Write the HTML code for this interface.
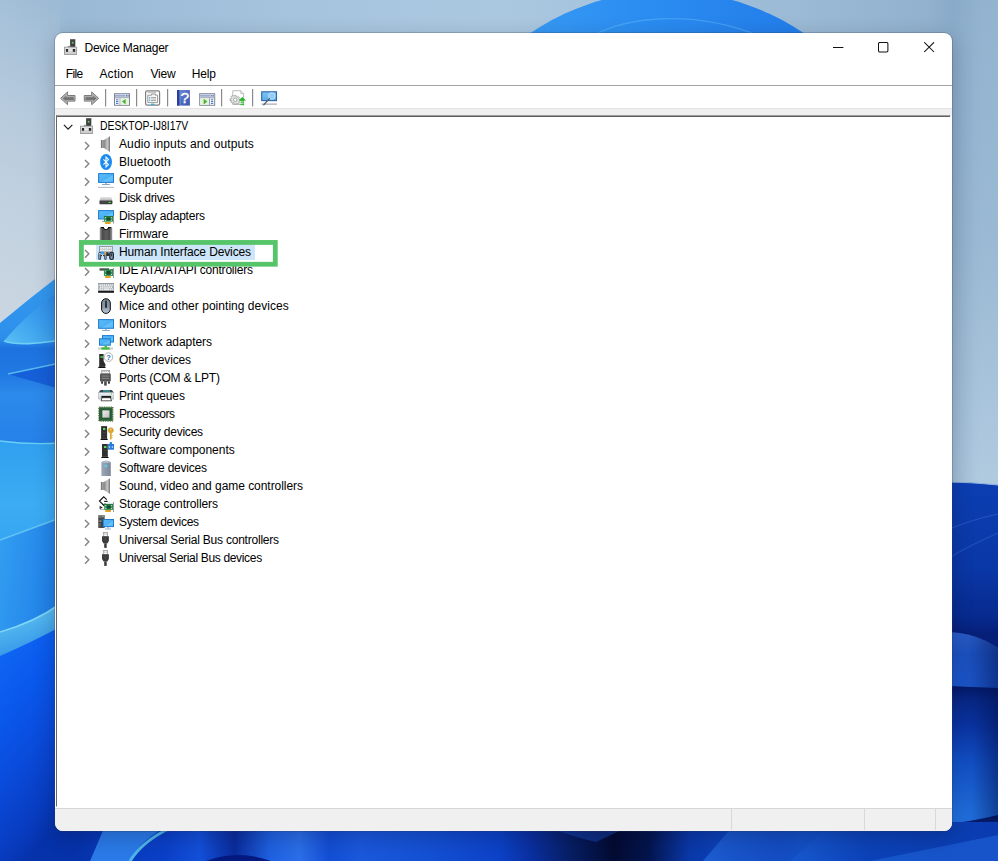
<!DOCTYPE html>
<html lang="en"><head><meta charset="utf-8"><title>Device Manager</title>
<style>
*{box-sizing:border-box;margin:0;padding:0}
html,body{width:998px;height:861px;overflow:hidden;background:#9db9d2}
body{position:relative;font-family:"Liberation Sans",sans-serif;font-size:12px;color:#000}
#wall{position:absolute;left:0;top:0;width:998px;height:861px}
#wall svg{display:block}
#win{position:absolute;left:55px;top:33px;width:897px;height:798px;background:#fff;border-radius:8px;overflow:hidden;box-shadow:0 0 0 1px rgba(50,60,85,.24),0 6px 22px rgba(0,0,25,.22)}
#title{position:absolute;left:0;top:0;width:897px;height:29px}
.ticon{position:absolute;left:8px;top:6px;width:16px;height:16px}
.ticon svg,.ic svg{display:block}
.ttext{position:absolute;left:29.5px;top:8px;line-height:15px;letter-spacing:-0.255px;white-space:nowrap}
.cap{position:absolute;top:9px}
#menu{position:absolute;left:0;top:29px;width:897px;height:23px}
#menu span{position:absolute;top:5px;line-height:15px;white-space:nowrap}
#tools{position:absolute;left:0;top:52px;width:897px;height:24px;border-top:1px solid #a3a3a3;border-bottom:1px solid #e3e3e3;background:#fff}
#band{position:absolute;left:0;top:76px;width:897px;height:6px;background:#f0f0f0}
#tree{position:absolute;left:1px;top:82px;width:895px;height:692px;background:linear-gradient(#5f5f5f 0,#5f5f5f 1px,#fff 1px);border-top:1px solid #9d9d9d;border-left:1px solid #666;border-right:1px solid #fff;border-bottom:1px solid #fff;padding-top:1px}
.row{position:relative;height:18px;white-space:nowrap}
.row .chev{position:absolute;left:27.2px;top:5.7px}
.row .ic{position:absolute;left:41px;top:1px;width:16px;height:16px}
.row .lb{position:absolute;left:62px;top:1.4px;line-height:16px}
.row.root .chev{left:5.5px;top:6.6px}
.row.root .ic{left:22px;top:1px}
.row.root .lb{left:43px}
.row.sel::before{content:'';position:absolute;left:39px;top:0;width:158.6px;height:17.2px;background:#cce5f9}
#status{position:absolute;left:0;top:774px;width:897px;height:24px;background:linear-gradient(#fff 0,#fff 1px,#d6d6d6 1px,#d6d6d6 2px,#f0f0f0 2px)}
#status i{position:absolute;top:2px;width:1px;height:21px;background:#d9d9d9}
#hl{position:absolute;left:0;top:0;width:998px;height:861px;pointer-events:none}

</style></head>
<body>
<svg width="0" height="0" style="position:absolute"><defs>
<linearGradient id="gBase" x1="0" y1="0" x2="0" y2="1"><stop offset="0" stop-color="#e6e6e6"/><stop offset="1" stop-color="#c9c9c9"/></linearGradient>
<linearGradient id="gSpkA" x1="0" y1="0" x2="1" y2="0"><stop offset="0" stop-color="#5c5c5c"/><stop offset=".55" stop-color="#a2a2a2"/><stop offset="1" stop-color="#6e6e6e"/></linearGradient>
<linearGradient id="gSpkB" x1="0" y1="0" x2="1" y2="0"><stop offset="0" stop-color="#7d7d7d"/><stop offset=".6" stop-color="#c6c6c6"/><stop offset=".85" stop-color="#9a9a9a"/><stop offset="1" stop-color="#5a5a5a"/></linearGradient>
<linearGradient id="gScr" x1="0" y1="0" x2="1" y2="1"><stop offset="0" stop-color="#5cbbf7"/><stop offset=".55" stop-color="#4bb1f4"/><stop offset=".6" stop-color="#68c2f8"/><stop offset="1" stop-color="#55b6f5"/></linearGradient>
<linearGradient id="gDiskT" x1="0" y1="0" x2="0" y2="1"><stop offset="0" stop-color="#e8e8e8"/><stop offset="1" stop-color="#b2b2b2"/></linearGradient>
<linearGradient id="gChip" x1="0" y1="0" x2="1" y2="0"><stop offset="0" stop-color="#444"/><stop offset=".5" stop-color="#5e5e5e"/><stop offset="1" stop-color="#484848"/></linearGradient>
<linearGradient id="gMouse" x1="0" y1="0" x2="0" y2="1"><stop offset="0" stop-color="#76869a"/><stop offset=".6" stop-color="#8d9bad"/><stop offset="1" stop-color="#c0c9d3"/></linearGradient>
<linearGradient id="gPrn" x1="0" y1="0" x2="0" y2="1"><stop offset="0" stop-color="#eef1f4"/><stop offset="1" stop-color="#c9d0d8"/></linearGradient>
<linearGradient id="gDie" x1="0" y1="0" x2="1" y2="1"><stop offset="0" stop-color="#f4f4f4"/><stop offset="1" stop-color="#b9b9b9"/></linearGradient>
<linearGradient id="gSw" x1="0" y1="0" x2="1" y2="0"><stop offset="0" stop-color="#9ca8b8"/><stop offset="1" stop-color="#7c899b"/></linearGradient>
</defs></svg>
<div id="wall"><svg width="998" height="861" viewBox="0 0 998 861">
<defs>
<linearGradient id="sky" x1="0" y1="0" x2="1" y2="0">
 <stop offset="0" stop-color="#a4c0d8"/><stop offset=".07" stop-color="#9ab9d4"/><stop offset=".3" stop-color="#a6c4de"/><stop offset=".5" stop-color="#abc8e1"/><stop offset=".8" stop-color="#9bbad5"/><stop offset=".95" stop-color="#90b0cd"/><stop offset="1" stop-color="#93b3cf"/>
</linearGradient>
<linearGradient id="skyL" x1="0" y1="0" x2="0" y2="1">
 <stop offset="0" stop-color="#cfd9e3" stop-opacity="0"/><stop offset=".3" stop-color="#cfd9e3" stop-opacity=".42"/><stop offset=".6" stop-color="#cfd9e3" stop-opacity=".7"/><stop offset="1" stop-color="#cfd9e3" stop-opacity=".92"/>
</linearGradient>
<linearGradient id="skyR" x1="0" y1="0" x2="0" y2="1">
 <stop offset="0" stop-color="#b4cde2" stop-opacity="0"/><stop offset=".5" stop-color="#b4cde2" stop-opacity=".25"/><stop offset="1" stop-color="#b4cde2" stop-opacity=".9"/>
</linearGradient>
<linearGradient id="skyRs" x1="0" y1="0" x2="1" y2="0"><stop offset="0" stop-color="#5f86ae" stop-opacity="0"/><stop offset=".46" stop-color="#5f86ae" stop-opacity=".15"/><stop offset="1" stop-color="#5f86ae" stop-opacity="0"/></linearGradient>
<linearGradient id="top" x1="0" y1="0" x2="1" y2="0">
 <stop offset="0" stop-color="#45a8f6"/><stop offset=".45" stop-color="#2b8df1"/><stop offset="1" stop-color="#1c70e4"/>
</linearGradient>
<linearGradient id="leftA" x1="0" y1="0" x2="0" y2="1">
 <stop offset="0" stop-color="#3399ee"/><stop offset=".36" stop-color="#2d8feb"/><stop offset=".42" stop-color="#1d72df"/><stop offset=".57" stop-color="#2179e3"/><stop offset=".68" stop-color="#2c8aeb"/><stop offset="1" stop-color="#257fe8"/>
</linearGradient>
<linearGradient id="leftB" x1="0" y1="0" x2="0" y2="1">
 <stop offset="0" stop-color="#30a0f0"/><stop offset=".6" stop-color="#3cacf3"/><stop offset="1" stop-color="#36a5f2"/>
</linearGradient>
<linearGradient id="leftC" x1="0" y1="0" x2="1" y2="0.3">
 <stop offset="0" stop-color="#339ff2"/><stop offset="1" stop-color="#2080e7"/>
</linearGradient>
<linearGradient id="leftD" gradientUnits="userSpaceOnUse" x1="0" y1="650" x2="120" y2="750">
 <stop offset="0" stop-color="#0f66f4"/><stop offset=".3" stop-color="#0a58ec"/><stop offset=".55" stop-color="#0a4cdc"/><stop offset=".85" stop-color="#083cc0"/><stop offset="1.1" stop-color="#0632aa"/>
</linearGradient>
<linearGradient id="petal" x1="0" y1="1" x2="1" y2="0">
 <stop offset="0" stop-color="#58c0f4"/><stop offset=".5" stop-color="#3b9fee"/><stop offset="1" stop-color="#2a86e8"/>
</linearGradient>
<linearGradient id="band" x1="0" y1="0" x2="0.35" y2="1">
 <stop offset="0" stop-color="#66c8f3"/><stop offset=".5" stop-color="#4fb2ee"/><stop offset="1" stop-color="#3494e8"/>
</linearGradient>
<linearGradient id="bot" gradientUnits="userSpaceOnUse" x1="0" y1="0" x2="998" y2="0">
 <stop offset=".07" stop-color="#0634ae" stop-opacity="0"/><stop offset=".10" stop-color="#0838b8"/>
 <stop offset=".165" stop-color="#0a40c8"/><stop offset=".2" stop-color="#1350da"/><stop offset=".235" stop-color="#0a2c9c"/>
 <stop offset=".27" stop-color="#1e60e0"/><stop offset=".30" stop-color="#2b6ee8"/><stop offset=".33" stop-color="#134ed4"/>
 <stop offset=".36" stop-color="#1a58dc"/><stop offset=".43" stop-color="#1450d4"/><stop offset=".5" stop-color="#0c42c8"/><stop offset=".535" stop-color="#0a2e9c"/>
 <stop offset=".57" stop-color="#071f66"/><stop offset=".615" stop-color="#030b32"/><stop offset=".65" stop-color="#04154e"/><stop offset=".69" stop-color="#0a38a8"/>
 <stop offset=".74" stop-color="#0e46c0"/><stop offset=".8" stop-color="#1656cc"/><stop offset=".87" stop-color="#0c42b8"/><stop offset="1" stop-color="#0a3cb0"/>
</linearGradient>
<linearGradient id="botP" x1="0" y1="0" x2="1" y2="0"><stop offset="0" stop-color="#1d5ed2"/><stop offset=".5" stop-color="#164fc4" stop-opacity=".8"/><stop offset="1" stop-color="#0c3eb0" stop-opacity="0"/></linearGradient>
<linearGradient id="rightA" x1="0" y1="0" x2="0" y2="1">
 <stop offset="0" stop-color="#0c3eb2"/><stop offset=".4" stop-color="#0a37a6"/><stop offset=".62" stop-color="#072a8e"/><stop offset=".7" stop-color="#061f78"/><stop offset="1" stop-color="#061f78"/>
</linearGradient>
<linearGradient id="rightP" x1="0" y1="0" x2="0" y2="1">
 <stop offset="0" stop-color="#2c60cc"/><stop offset=".4" stop-color="#1d54c6"/><stop offset="1" stop-color="#1c5ad2"/>
</linearGradient>
<linearGradient id="rightPx" x1="0" y1="0" x2="1" y2="0">
 <stop offset="0" stop-color="#02104a" stop-opacity="0"/><stop offset=".45" stop-color="#02104a" stop-opacity=".08"/><stop offset="1" stop-color="#02104a" stop-opacity=".5"/>
</linearGradient>
<linearGradient id="rightB" x1="0" y1="0" x2="0" y2="1">
 <stop offset="0" stop-color="#041868"/><stop offset=".08" stop-color="#072888"/><stop offset=".22" stop-color="#0a34a4"/><stop offset=".42" stop-color="#1250c8"/><stop offset=".72" stop-color="#2070e0"/><stop offset=".8" stop-color="#2272e2"/><stop offset="1" stop-color="#2272e2"/>
</linearGradient>
<linearGradient id="rightBx" x1="0" y1="0" x2="1" y2="0">
 <stop offset="0" stop-color="#02104a" stop-opacity="0"/><stop offset=".5" stop-color="#02104a" stop-opacity=".06"/><stop offset="1" stop-color="#02104a" stop-opacity=".5"/>
</linearGradient>
<linearGradient id="rightC" x1="0" y1="0" x2="0" y2="1">
 <stop offset="0" stop-color="#04145c"/><stop offset=".25" stop-color="#06206f"/><stop offset=".5" stop-color="#0a36a8"/><stop offset="1" stop-color="#0c3eb6"/>
</linearGradient>
</defs>
<rect width="998" height="861" fill="url(#sky)"/>
<!-- left sky -->
<rect x="0" y="0" width="60" height="345" fill="url(#skyL)"/>
<!-- right sky -->
<rect x="945" y="0" width="53" height="490" fill="url(#skyR)"/>
<rect x="930" y="0" width="50" height="490" fill="url(#skyRs)"/>
<!-- top petal -->
<ellipse cx="667" cy="291" rx="268" ry="300" fill="url(#top)"/>
<path d="M592 36C625 18 690 8 760 36" fill="none" stroke="#57b2f8" stroke-width="1.3" opacity=".55"/>
<!-- left blue regions -->
<path d="M0 323Q30 298 60 275V450H0Z" fill="url(#leftA)"/>
<path d="M4 341C20 322 40 304 60 291V340.5C40 343 18 346 4 341Z" fill="url(#petal)"/>
<path d="M4 341C18 346 40 343 60 340.5" fill="none" stroke="#6fd0f6" stroke-width="1.6"/>
<path d="M8 374L60 363V389Z" fill="#155fd8"/>
<path d="M8 374L60 363" fill="none" stroke="#58b8f2" stroke-width="1.3"/>
<path d="M0 441Q30 445 60 443V545H0Z" fill="url(#leftB)"/>
<path d="M0 441Q30 445 60 443" fill="none" stroke="#6ad0f4" stroke-width="1.4"/>
<path d="M0 540L60 518V640H0Z" fill="url(#leftC)"/>
<path d="M0 540L60 518" fill="none" stroke="#62c4f4" stroke-width="1.6"/>
<path d="M0 632Q35 622 60 604H110V861H0Z" fill="url(#leftD)"/>
<path d="M0 632Q35 622 60 604V627Q32 642 0 656Z" fill="url(#band)"/>
<path d="M0 632Q35 622 60 604" fill="none" stroke="#7fd6f7" stroke-width="1.6"/>
<!-- right dark regions -->
<path d="M945 482Q970 482 998 485V700H945Z" fill="url(#rightA)"/>
<path d="M945 482Q970 482 998 485" fill="none" stroke="#8db4dc" stroke-width="1.2"/>
<path d="M945 531Q970 520 998 514" fill="none" stroke="#2a5cc4" stroke-width="1.2" opacity=".8"/>
<path d="M945 560Q970 545 998 533" fill="none" stroke="#2a5cc4" stroke-width="1.2" opacity=".6"/>
<path d="M945 632Q975 632 998 648V689L945 686Z" fill="url(#rightP)"/>
<path d="M945 632Q975 632 998 648V689L945 686Z" fill="url(#rightPx)"/>
<path d="M945 686L998 688V861H945Z" fill="url(#rightB)"/>
<path d="M945 686L998 688V861H945Z" fill="url(#rightBx)"/>
<path d="M945 824Q970 822 998 815V861H945Z" fill="url(#rightC)"/>
<path d="M962 861Q972 842 990 832L998 840V861Z" fill="#051a66" opacity=".75"/>
<!-- bottom strip -->
<rect x="48" y="822" width="950" height="39" fill="url(#bot)"/>
<path d="M105 826L90 861H130Q140 840 168 826Z" fill="#2a7ae8"/>
<path d="M168 829Q142 842 130 861" fill="none" stroke="#4fb6ea" stroke-width="3"/>
<path d="M206 861Q238 849 271 861Z" fill="#041a80"/>
<path d="M545 826H630L596 842Q570 836 545 826Z" fill="#1a4ec8" opacity=".45"/>
<path d="M733 826L703 861H790L830 826Z" fill="url(#botP)"/>
<path d="M870 861L998 835V861Z" fill="#1a5ad0" opacity=".8"/>
</svg>
</div>
<div id="win">
 <div id="title"><span class="ticon"><svg width="16" height="16" viewBox="0 0 16 16"><rect x="7.1" y="0.4" width="5.2" height="7.6" fill="#404040"/><rect x="7.1" y="0.4" width="5.2" height="0.8" fill="#555"/><circle cx="9.7" cy="3.7" r="1" fill="#58cf58"/><rect x="4.8" y="6.9" width="2.4" height="1.1" fill="#8c8c8c"/><rect x="1.5" y="8.2" width="12.1" height="7.3" fill="url(#gBase)" stroke="#9a9a9a" stroke-width="0.9"/><rect x="2.9" y="10" width="2.2" height="2.8" fill="#2b2b2b"/><rect x="9.8" y="10" width="2.4" height="2.8" fill="#2b2b2b"/><rect x="5.6" y="10.8" width="3.8" height="0.8" fill="#fff" opacity=".7"/></svg></span><span class="ttext">Device Manager</span>
  <svg class="cap" style="left:778px" width="11" height="11" viewBox="0 0 11 11"><path d="M0 5.5H10.4" stroke="#111" stroke-width="1"/></svg>
  <svg class="cap" style="left:823px" width="11" height="11" viewBox="0 0 11 11"><rect x="0.5" y="0.5" width="9.4" height="9.4" rx="1.2" fill="none" stroke="#111" stroke-width="1.05"/></svg>
  <svg class="cap" style="left:869px" width="11" height="11" viewBox="0 0 11 11"><path d="M0.3 0.3L10 10M10 0.3L0.3 10" stroke="#111" stroke-width="1.05" fill="none"/></svg>
 </div>
 <div id="menu"><span style="left:10.7px;letter-spacing:-0.64px">File</span><span style="left:44.5px;letter-spacing:0.12px">Action</span><span style="left:95.6px;letter-spacing:-0.27px">View</span><span style="left:136.7px;letter-spacing:-0.17px">Help</span></div>
 <div id="tools"><svg class="tb" width="240" height="22" viewBox="0 0 240 22" style="position:absolute;left:0;top:0">
<defs>
<linearGradient id="ag" x1="0" y1="0" x2="0" y2="1"><stop offset="0" stop-color="#9a9a9a"/><stop offset=".55" stop-color="#707070"/><stop offset="1" stop-color="#858585"/></linearGradient>
<linearGradient id="hg" x1="0" y1="0" x2="1" y2="1"><stop offset="0" stop-color="#6f8ad8"/><stop offset="1" stop-color="#3b54b0"/></linearGradient>
<linearGradient id="mg" x1="0" y1="0" x2="0" y2="1"><stop offset="0" stop-color="#7cc4f4"/><stop offset="1" stop-color="#5aaeea"/></linearGradient>
</defs>
<!-- back / forward -->
<path d="M5.6 12.3L12.6 5.9V9.5H20V15.1H12.6V18.7Z" fill="#b7b7b7" stroke="#7b7b7b" stroke-width="1" stroke-linejoin="round"/>
<path d="M7.7 12.3L11.4 8.9V10.7H18.8V13.9H11.4V15.7Z" fill="url(#ag)"/>
<path d="M43.7 12.3L36.7 5.9V9.5H29.3V15.1H36.7V18.7Z" fill="#b7b7b7" stroke="#7b7b7b" stroke-width="1" stroke-linejoin="round"/>
<path d="M41.6 12.3L37.9 8.9V10.7H30.5V13.9H37.9V15.7Z" fill="url(#ag)"/>
<!-- separators -->
<g fill="#8b8b8b"><rect x="50" y="3" width="1.2" height="17.4"/><rect x="81" y="3" width="1.2" height="17.4"/><rect x="112" y="3" width="1.2" height="17.4"/><rect x="166" y="3" width="1.2" height="17.4"/><rect x="197" y="3" width="1.2" height="17.4"/></g>
<!-- show/hide console tree -->
<g>
<rect x="59.5" y="7.7" width="15" height="11.6" fill="#fff" stroke="#7d8597" stroke-width="1"/>
<rect x="60" y="8.2" width="14" height="3.3" fill="#c3cce0"/>
<rect x="60" y="9.3" width="10" height="1" fill="#8a9cc6"/>
<rect x="71" y="9" width="1" height="1.4" fill="#6f7fa8"/><rect x="72.6" y="9" width="1" height="1.4" fill="#6f7fa8"/>
<rect x="60" y="11.4" width="14" height="0.9" fill="#8c94a8"/>
<rect x="64.6" y="12.3" width="0.9" height="6.6" fill="#8c94a8"/>
<rect x="65.5" y="12.3" width="8.5" height="6.6" fill="#e4f3dc"/>
<rect x="61" y="13.3" width="2.4" height="1" fill="#3a6fc4"/><rect x="61" y="15.1" width="2.4" height="1" fill="#3a6fc4"/><rect x="61" y="16.9" width="2.4" height="1" fill="#3a6fc4"/>
<path d="M67 15.6L70.6 12.9V18.3Z" fill="#4fae35"/>
</g>
<!-- properties -->
<g>
<rect x="90.6" y="4.8" width="14" height="14.4" rx="1.6" fill="#fff" stroke="#7e7e7e" stroke-width="1.2"/>
<rect x="92.6" y="6.2" width="8.6" height="1" fill="#b9b9b9"/>
<path d="M92.8 9.2H96.6V8H100.4V9.2H102.6V16.6H92.8Z" fill="#f4f6f8" stroke="#8e8e8e" stroke-width="0.9"/>
<rect x="94" y="11.2" width="1.2" height="1.2" fill="#2fa6d8"/><rect x="96" y="11.3" width="5" height="1" fill="#8a8a8a"/>
<rect x="94" y="13.6" width="1.2" height="1.2" fill="#2fa6d8"/><rect x="96" y="13.7" width="5" height="1" fill="#8a8a8a"/>
<rect x="96" y="17.6" width="3.4" height="1.4" fill="#2fb4e4"/>
</g>
<!-- help -->
<g>
<rect x="122" y="4" width="12.9" height="15.6" fill="url(#hg)"/>
<rect x="122" y="4" width="2.6" height="15.6" fill="#2c3f98"/>
<rect x="124.6" y="4" width="0.8" height="15.6" fill="#8ea4e6" opacity=".7"/>
<text x="129.9" y="17.2" text-anchor="middle" font-family="Liberation Sans, sans-serif" font-size="15.5" fill="#fff" stroke="#fff" stroke-width="0.35">?</text>
</g>
<!-- action pane -->
<g>
<rect x="144.7" y="7.7" width="15" height="11.6" fill="#fff" stroke="#7d8597" stroke-width="1"/>
<rect x="145.2" y="8.2" width="14" height="3.3" fill="#c3cce0"/>
<rect x="145.2" y="9.3" width="10" height="1" fill="#8a9cc6"/>
<rect x="156.2" y="9" width="1" height="1.4" fill="#6f7fa8"/><rect x="157.8" y="9" width="1" height="1.4" fill="#6f7fa8"/>
<rect x="145.2" y="11.4" width="14" height="0.9" fill="#8c94a8"/>
<rect x="154" y="12.3" width="0.9" height="6.6" fill="#8c94a8"/>
<rect x="145.2" y="12.3" width="8.8" height="6.6" fill="#e4f3dc"/>
<rect x="155.9" y="13.3" width="2.4" height="1" fill="#3a6fc4"/><rect x="155.9" y="15.1" width="2.4" height="1" fill="#3a6fc4"/><rect x="155.9" y="16.9" width="2.4" height="1" fill="#3a6fc4"/>
<path d="M152.4 15.6L148.6 12.7V18.5Z" fill="#4fae35"/>
</g>
<!-- update driver -->
<g>
<path d="M177.8 4.7H185.8L188.6 7.5V18.5H177.8Z" fill="#fff" stroke="#b4b4b4" stroke-width="0.9"/>
<path d="M185.8 4.7V7.5H188.6" fill="#eee" stroke="#b4b4b4" stroke-width="0.8"/>
<g transform="translate(180.2 13.8)">
 <path d="M-1 -5h2l.4 1.3 1.1.5 1.2-.7 1.4 1.4-.7 1.2.5 1.1L6.2 -1v2l-1.3.4-.5 1.1.7 1.2-1.4 1.4-1.2-.7-1.1.5L1 5.2h-2l-.4-1.3-1.1-.5-1.2.7-1.4-1.4.7-1.2-.5-1.1L-6.2 1v-2l1.3-.4.5-1.1-.7-1.2 1.4-1.4 1.2.7 1.1-.5Z" fill="#e2e2e2" stroke="#969696" stroke-width="0.9" transform="scale(.84)"/>
 <circle r="1.7" fill="#fff" stroke="#8a8a8a" stroke-width="0.7"/>
</g>
<path d="M187.3 10.9L191 14.6H189.1V15.6H185.5V14.6H183.6Z" fill="#2fb52f"/>
<rect x="185.5" y="16.3" width="3.6" height="1.1" fill="#2fb52f"/><rect x="185.5" y="18.1" width="3.6" height="1.1" fill="#2fb52f"/>
</g>
<!-- scan for hardware changes -->
<g>
<rect x="206.7" y="5.8" width="14.8" height="8.8" fill="url(#mg)" stroke="#2c66a8" stroke-width="1.1"/>
<rect x="206.5" y="17.6" width="15.4" height="1" fill="#8d99a8"/>
<circle cx="216.8" cy="10" r="3.3" fill="#93cdf5" stroke="#bfe1f9" stroke-width="0.9"/>
<path d="M214.4 12.6L208.8 18.8" stroke="#56606e" stroke-width="1.3" stroke-linecap="round"/>
</g>
</svg>
</div>
 <div id="band"></div>
 <div id="tree">
  <div class="row root"><svg class="chev" width="11" height="7" viewBox="0 0 11 7"><path d="M0.9 0.9l4.2 4.2L9.3 0.9" fill="none" stroke="#262626" stroke-width="1.3"/></svg><span class="ic"><svg width="16" height="16" viewBox="0 0 16 16"><rect x="7.1" y="0.4" width="5.2" height="7.6" fill="#404040"/><rect x="7.1" y="0.4" width="5.2" height="0.8" fill="#555"/><circle cx="9.7" cy="3.7" r="1" fill="#58cf58"/><rect x="4.8" y="6.9" width="2.4" height="1.1" fill="#8c8c8c"/><rect x="1.5" y="8.2" width="12.1" height="7.3" fill="url(#gBase)" stroke="#9a9a9a" stroke-width="0.9"/><rect x="2.9" y="10" width="2.2" height="2.8" fill="#2b2b2b"/><rect x="9.8" y="10" width="2.4" height="2.8" fill="#2b2b2b"/><rect x="5.6" y="10.8" width="3.8" height="0.8" fill="#fff" opacity=".7"/></svg></span><span class="lb" style="display:inline-block;transform:scaleX(0.866);transform-origin:0 50%">DESKTOP-IJ8I17V</span></div>
  <div class="row"><svg class="chev" width="7" height="10" viewBox="0 0 7 10"><path d="M1 0.9l3.8 3.9L1 8.7" fill="none" stroke="#868686" stroke-width="1.45"/></svg><span class="ic"><svg width="16" height="16" viewBox="0 0 16 16"><rect x="2.9" y="4" width="2.8" height="8" fill="url(#gSpkA)"/><path d="M5.6 4.3L11.9 0.2V15.9L5.6 11.7Z" fill="url(#gSpkB)"/></svg></span><span class="lb" style="letter-spacing:0.12px">Audio inputs and outputs</span></div>
  <div class="row"><svg class="chev" width="7" height="10" viewBox="0 0 7 10"><path d="M1 0.9l3.8 3.9L1 8.7" fill="none" stroke="#868686" stroke-width="1.45"/></svg><span class="ic"><svg width="16" height="16" viewBox="0 0 16 16"><ellipse cx="8.05" cy="8" rx="5.95" ry="8" fill="#1b8bf1"/><path d="M5.4 5.3L10.5 10.5L8 12.9V3.1L10.5 5.5L5.4 10.7" fill="none" stroke="#fff" stroke-width="1.05" stroke-linejoin="miter"/></svg></span><span class="lb" style="letter-spacing:0.109px">Bluetooth</span></div>
  <div class="row"><svg class="chev" width="7" height="10" viewBox="0 0 7 10"><path d="M1 0.9l3.8 3.9L1 8.7" fill="none" stroke="#868686" stroke-width="1.45"/></svg><span class="ic"><svg width="16" height="16" viewBox="0 0 16 16"><rect x="0.6" y="1.6" width="14.9" height="8.8" fill="url(#gScr)" stroke="#1e7bd2" stroke-width="1"/><rect x="4" y="12" width="7.9" height="0.9" fill="#7a9cc2"/><rect x="7.2" y="10.9" width="1.6" height="1.1" fill="#8fb4dc"/><rect x="0" y="14.9" width="16" height="0.9" fill="#a9b0b8"/></svg></span><span class="lb" style="letter-spacing:0.164px">Computer</span></div>
  <div class="row"><svg class="chev" width="7" height="10" viewBox="0 0 7 10"><path d="M1 0.9l3.8 3.9L1 8.7" fill="none" stroke="#868686" stroke-width="1.45"/></svg><span class="ic"><svg width="16" height="16" viewBox="0 0 16 16"><path d="M2.6 7H13.3L14.4 10.7H1.5Z" fill="url(#gDiskT)"/><rect x="1.5" y="10.6" width="12.9" height="3.6" rx="0.6" fill="#3b3b3b"/><rect x="2.6" y="11.8" width="6.4" height="0.7" fill="#5c5c5c"/><rect x="10.3" y="11.8" width="2.6" height="1.2" fill="#49d049"/></svg></span><span class="lb" style="letter-spacing:-0.281px">Disk drives</span></div>
  <div class="row"><svg class="chev" width="7" height="10" viewBox="0 0 7 10"><path d="M1 0.9l3.8 3.9L1 8.7" fill="none" stroke="#868686" stroke-width="1.45"/></svg><span class="ic"><svg width="16" height="16" viewBox="0 0 16 16"><rect x="0.6" y="2.6" width="14.9" height="8.4" fill="url(#gScr)" stroke="#1e7bd2" stroke-width="1"/><rect x="5.9" y="8" width="9.1" height="5.7" fill="#2e8f52"/><rect x="5.9" y="8" width="9.1" height="0.8" fill="#1f6f3c"/><rect x="8.5" y="9.5" width="4" height="2.9" fill="#1d4a33"/><circle cx="7.5" cy="9.7" r="0.6" fill="#bfe8c8"/><circle cx="7.5" cy="12.2" r="0.6" fill="#bfe8c8"/><circle cx="13.4" cy="9.7" r="0.6" fill="#bfe8c8"/><circle cx="13.4" cy="12.2" r="0.6" fill="#bfe8c8"/><rect x="15" y="8" width="1" height="7.6" fill="#9a9a9a"/><rect x="4" y="13.2" width="2" height="0.7" fill="#8a8a8a"/><rect x="6.9" y="14" width="5.9" height="1.9" fill="#e9a61e"/><rect x="8.6" y="14" width="0.5" height="1.9" fill="#c98a10"/><rect x="10.6" y="14" width="0.5" height="1.9" fill="#c98a10"/></svg></span><span class="lb" style="letter-spacing:-0.231px">Display adapters</span></div>
  <div class="row"><svg class="chev" width="7" height="10" viewBox="0 0 7 10"><path d="M1 0.9l3.8 3.9L1 8.7" fill="none" stroke="#868686" stroke-width="1.45"/></svg><span class="ic"><svg width="16" height="16" viewBox="0 0 16 16"><rect x="3.3" y="1" width="9.4" height="13.2" fill="url(#gChip)"/><rect x="2.6" y="1" width="10.8" height="1.1" fill="#111"/><path d="M2.55 2.6V14.2" stroke="#111" stroke-width="1.5" stroke-dasharray="1 1"/><path d="M13.45 2.6V14.2" stroke="#111" stroke-width="1.5" stroke-dasharray="1 1"/><path d="M5.8 1A2.2 2.2 0 0 0 10.2 1Z" fill="#fff"/><path d="M5.3 1A2.7 2.7 0 0 0 10.7 1" fill="none" stroke="#111" stroke-width="0.9"/></svg></span><span class="lb" style="letter-spacing:-0.087px">Firmware</span></div>
  <div class="row sel"><svg class="chev" width="7" height="10" viewBox="0 0 7 10"><path d="M1 0.9l3.8 3.9L1 8.7" fill="none" stroke="#868686" stroke-width="1.45"/></svg><span class="ic"><svg width="16" height="16" viewBox="0 0 16 16"><rect x="1.5" y="2.5" width="12.9" height="5.4" fill="#e9eef2" stroke="#8b9399" stroke-width="0.9"/><path d="M2.6 4.1H13.4" stroke="#fff" stroke-width="1.1" stroke-dasharray="1.5 0.6"/><path d="M2.2 5.2H13.8" stroke="#a9b1b8" stroke-width="0.8"/><path d="M3.2 6.4H12.8" stroke="#fff" stroke-width="1.1" stroke-dasharray="1.5 0.6"/><path d="M4.2 3.2V7.4M6.3 3.2V7.4M8.4 3.2V7.4M10.5 3.2V7.4M12.4 3.2V7.4" stroke="#b4bbc2" stroke-width="0.5"/><path d="M1.2 8H10.6V10.6H8.8L8.7 15.2Q7.4 16.6 6.2 15.2L6 11.8H3.3L3 15.2Q1.6 16.6 0.2 15.2L0.1 10.2Q0.2 8.5 1.2 8Z" fill="#46566a"/><path d="M0.9 10.6L1.9 10.8L2 14.6H1Z" fill="#8fa0b0"/><path d="M6.9 11.8H8L7.9 14.8H7Z" fill="#8fa0b0"/><rect x="3" y="10.2" width="3" height="1.7" fill="#e6eef6"/><circle cx="3.5" cy="11.6" r="0.55" fill="#15181c"/><circle cx="5.5" cy="11.6" r="0.55" fill="#15181c"/><rect x="2.8" y="7.7" width="3.3" height="2.5" fill="#3a9de2"/><path d="M6.1 7.9H8.2V11.4H6.9L6.1 10Z" fill="#c9a468"/><rect x="0.8" y="9.2" width="1.8" height="1.2" fill="#e8eef4"/><rect x="8.4" y="9.4" width="3" height="2.6" fill="#2b2d34"/><rect x="11.2" y="7.7" width="4.8" height="8.2" rx="1.9" fill="#1e2834"/><rect x="12.5" y="8.8" width="2.2" height="6.2" rx="0.9" fill="#8d99a6"/><rect x="13.2" y="9.4" width="0.8" height="2.8" fill="#1c222a"/></svg></span><span class="lb" style="letter-spacing:-0.119px">Human Interface Devices</span></div>
  <div class="row"><svg class="chev" width="7" height="10" viewBox="0 0 7 10"><path d="M1 0.9l3.8 3.9L1 8.7" fill="none" stroke="#868686" stroke-width="1.45"/></svg><span class="ic"><svg width="16" height="16" viewBox="0 0 16 16"><rect x="1.5" y="6.3" width="9.6" height="2.3" fill="#4b4b4b"/><rect x="5.9" y="7.3" width="9.1" height="6.6" fill="#2e8f52"/><rect x="5.9" y="7.3" width="9.1" height="0.8" fill="#1f6f3c"/><rect x="8.5" y="8.8" width="4" height="3.8" fill="#1d4a33"/><circle cx="7.5" cy="9.0" r="0.6" fill="#bfe8c8"/><circle cx="7.5" cy="12.4" r="0.6" fill="#bfe8c8"/><circle cx="13.4" cy="9.0" r="0.6" fill="#bfe8c8"/><circle cx="13.4" cy="12.4" r="0.6" fill="#bfe8c8"/><rect x="15" y="6" width="1" height="9.9" fill="#9a9a9a"/><rect x="7" y="14.1" width="5.8" height="1.8" fill="#e9a61e"/><rect x="8.6" y="14.1" width="0.5" height="1.8" fill="#c98a10"/><rect x="10.6" y="14.1" width="0.5" height="1.8" fill="#c98a10"/><circle cx="11.7" cy="7" r="0.7" fill="#d7f0dc"/></svg></span><span class="lb" style="letter-spacing:-0.214px">IDE ATA/ATAPI controllers</span></div>
  <div class="row"><svg class="chev" width="7" height="10" viewBox="0 0 7 10"><path d="M1 0.9l3.8 3.9L1 8.7" fill="none" stroke="#868686" stroke-width="1.45"/></svg><span class="ic"><svg width="16" height="16" viewBox="0 0 16 16"><rect x="0.1" y="3.1" width="15.9" height="8.2" fill="#a9b0b7"/><rect x="0.1" y="3.1" width="15.9" height="0.8" fill="#8e959c"/><path d="M1.4 5.2H14.8" stroke="#fff" stroke-width="1.3" stroke-dasharray="1.5 0.6"/><path d="M2 7.2H14.6" stroke="#fff" stroke-width="1.3" stroke-dasharray="1.5 0.6"/><path d="M1.4 9.2H14.8" stroke="#fff" stroke-width="1.3" stroke-dasharray="1.5 0.6 1.5 0.6 5.5 0.6 1.5 0.6"/><rect x="0.1" y="10.9" width="15.9" height="1.9" fill="#1b1b1b"/></svg></span><span class="lb" style="letter-spacing:-0.297px">Keyboards</span></div>
  <div class="row"><svg class="chev" width="7" height="10" viewBox="0 0 7 10"><path d="M1 0.9l3.8 3.9L1 8.7" fill="none" stroke="#868686" stroke-width="1.45"/></svg><span class="ic"><svg width="16" height="16" viewBox="0 0 16 16"><rect x="3.6" y="0.7" width="8.7" height="14.7" rx="4.3" fill="url(#gMouse)" stroke="#0d0d0d" stroke-width="1"/><rect x="7" y="2.4" width="2" height="7.6" rx="0.9" fill="#2b2d30"/><rect x="7.7" y="2.6" width="0.6" height="4" fill="#555"/></svg></span><span class="lb" style="letter-spacing:0.033px">Mice and other pointing devices</span></div>
  <div class="row"><svg class="chev" width="7" height="10" viewBox="0 0 7 10"><path d="M1 0.9l3.8 3.9L1 8.7" fill="none" stroke="#868686" stroke-width="1.45"/></svg><span class="ic"><svg width="16" height="16" viewBox="0 0 16 16"><rect x="0.6" y="3.6" width="14.9" height="8.7" fill="url(#gScr)" stroke="#1e7bd2" stroke-width="1"/><rect x="7.2" y="12.8" width="1.6" height="1.2" fill="#8fb4dc"/><rect x="4" y="14" width="8" height="0.9" fill="#86a4c4"/></svg></span><span class="lb" style="letter-spacing:0.223px">Monitors</span></div>
  <div class="row"><svg class="chev" width="7" height="10" viewBox="0 0 7 10"><path d="M1 0.9l3.8 3.9L1 8.7" fill="none" stroke="#868686" stroke-width="1.45"/></svg><span class="ic"><svg width="16" height="16" viewBox="0 0 16 16"><rect x="4.5" y="1.6" width="11" height="6.4" fill="url(#gScr)" stroke="#1e7bd2" stroke-width="1"/><rect x="1.5" y="4.8" width="10.8" height="6.4" fill="url(#gScr)" stroke="#1e7bd2" stroke-width="1"/><rect x="0" y="13.4" width="15" height="2.2" fill="#d0d0d0"/><rect x="3.4" y="13.4" width="8.2" height="2.2" fill="#3db83d"/><rect x="6.5" y="11.7" width="2.5" height="1.8" fill="#3db83d"/></svg></span><span class="lb" style="letter-spacing:-0.072px">Network adapters</span></div>
  <div class="row"><svg class="chev" width="7" height="10" viewBox="0 0 7 10"><path d="M1 0.9l3.8 3.9L1 8.7" fill="none" stroke="#868686" stroke-width="1.45"/></svg><span class="ic"><svg width="16" height="16" viewBox="0 0 16 16"><path d="M1.2 2H5.6V9L7.5 12.4V14.3H1.2Z" fill="#2d2d2d"/><rect x="2.4" y="4.2" width="3.2" height="1.6" fill="#4bd04b"/><path d="M0 15.9L1 14.2H6.8L7.8 15.9Z" fill="#111"/><circle cx="10.5" cy="5.1" r="4.3" fill="#fff" stroke="#a3abb4" stroke-width="0.9"/><text x="10.5" y="7.9" text-anchor="middle" font-family="Liberation Sans, sans-serif" font-weight="bold" font-size="7.6" fill="#2b6cb8">?</text></svg></span><span class="lb" style="letter-spacing:-0.165px">Other devices</span></div>
  <div class="row"><svg class="chev" width="7" height="10" viewBox="0 0 7 10"><path d="M1 0.9l3.8 3.9L1 8.7" fill="none" stroke="#868686" stroke-width="1.45"/></svg><span class="ic"><svg width="16" height="16" viewBox="0 0 16 16"><rect x="3.7" y="0.5" width="7.9" height="3.4" fill="#f2f2f2" stroke="#9b9b9b" stroke-width="0.8"/><path d="M4.6 1.4H11" stroke="#9b9b9b" stroke-width="1" stroke-dasharray="0.8 1"/><rect x="2" y="3.6" width="10.8" height="7.9" rx="0.9" fill="#565656"/><rect x="3.8" y="5.6" width="7.2" height="0.9" fill="#8c8c8c"/><rect x="3.8" y="7.9" width="7.2" height="0.9" fill="#8c8c8c"/><rect x="3.1" y="11.4" width="1.9" height="2.3" fill="#333"/><rect x="10" y="11.4" width="1.9" height="2.3" fill="#333"/><rect x="6.2" y="11.4" width="2.5" height="4.2" fill="#444"/></svg></span><span class="lb" style="letter-spacing:-0.195px">Ports (COM &amp; LPT)</span></div>
  <div class="row"><svg class="chev" width="7" height="10" viewBox="0 0 7 10"><path d="M1 0.9l3.8 3.9L1 8.7" fill="none" stroke="#868686" stroke-width="1.45"/></svg><span class="ic"><svg width="16" height="16" viewBox="0 0 16 16"><path d="M2.6 2H13.7L16 4.7H0.2Z" fill="#3b4551"/><rect x="5" y="2.5" width="7" height="1" fill="#3cc6b5"/><rect x="0.2" y="4.5" width="15.9" height="6.6" rx="1" fill="url(#gPrn)" stroke="#98a1ab" stroke-width="0.6"/><rect x="3.4" y="7.9" width="9.7" height="2.2" fill="#1a1a1a"/><path d="M4.2 9.7H12.4L13.6 12.8H3Z" fill="#fff" stroke="#2e2e2e" stroke-width="0.8"/><circle cx="13.4" cy="5.8" r="0.65" fill="#3ad23a"/></svg></span><span class="lb" style="letter-spacing:-0.133px">Print queues</span></div>
  <div class="row"><svg class="chev" width="7" height="10" viewBox="0 0 7 10"><path d="M1 0.9l3.8 3.9L1 8.7" fill="none" stroke="#868686" stroke-width="1.45"/></svg><span class="ic"><svg width="16" height="16" viewBox="0 0 16 16"><rect x="1" y="1.3" width="13.6" height="13.6" fill="#2b6239"/><rect x="0.8" y="1.1" width="14" height="14" fill="none" stroke="#3f6a2c" stroke-width="1.3" stroke-dasharray="0.9 0.85"/><rect x="3.9" y="3.9" width="8.1" height="8.2" fill="url(#gDie)" stroke="#1f4a2a" stroke-width="0.9"/></svg></span><span class="lb" style="letter-spacing:-0.443px">Processors</span></div>
  <div class="row"><svg class="chev" width="7" height="10" viewBox="0 0 7 10"><path d="M1 0.9l3.8 3.9L1 8.7" fill="none" stroke="#868686" stroke-width="1.45"/></svg><span class="ic"><svg width="16" height="16" viewBox="0 0 16 16"><rect x="3.1" y="2.1" width="6" height="12.6" fill="#313131"/><rect x="5" y="4" width="2.3" height="1.9" fill="#5be05b"/><rect x="4.2" y="8" width="3.8" height="0.6" fill="#4a4a4a"/><path d="M2.2 16L3.1 14.6H9.1L10 16Z" fill="#111"/><circle cx="12.8" cy="6.3" r="2.55" fill="#dba92e" stroke="#c4901c" stroke-width="0.6"/><circle cx="12.8" cy="5.2" r="0.8" fill="#f6dd96"/><path d="M12 8.4H13.7V15L12.9 15.8L12 15Z" fill="#dba92e"/><rect x="13.7" y="11" width="0.9" height="0.9" fill="#dba92e"/><rect x="13.7" y="13" width="0.9" height="0.9" fill="#dba92e"/></svg></span><span class="lb" style="letter-spacing:-0.217px">Security devices</span></div>
  <div class="row"><svg class="chev" width="7" height="10" viewBox="0 0 7 10"><path d="M1 0.9l3.8 3.9L1 8.7" fill="none" stroke="#868686" stroke-width="1.45"/></svg><span class="ic"><svg width="16" height="16" viewBox="0 0 16 16"><rect x="4" y="2" width="5.8" height="12.6" fill="#313131"/><rect x="6" y="4.1" width="2.5" height="1.9" fill="#5be05b"/><rect x="5.2" y="8.5" width="3.4" height="0.6" fill="#4a4a4a"/><path d="M3 16L4 14.5H9.8L11 16Z" fill="#111"/><rect x="9.8" y="2" width="6.2" height="5.7" fill="#2b7bd8"/><rect x="11.6" y="0.1" width="2.5" height="2.4" rx="0.9" fill="#2b7bd8"/><circle cx="11.4" cy="4.9" r="0.75" fill="#e6f1fc"/><circle cx="14.4" cy="4.9" r="0.75" fill="#e6f1fc"/></svg></span><span class="lb" style="letter-spacing:-0.019px">Software components</span></div>
  <div class="row"><svg class="chev" width="7" height="10" viewBox="0 0 7 10"><path d="M1 0.9l3.8 3.9L1 8.7" fill="none" stroke="#868686" stroke-width="1.45"/></svg><span class="ic"><svg width="16" height="16" viewBox="0 0 16 16"><path d="M3.4 2.3Q8.1 -0.6 12.8 2.3V16H3.4Z" fill="url(#gSw)"/><path d="M3.4 2.3Q8.1 -0.6 12.8 2.3Q8.1 3.6 3.4 2.3Z" fill="#b4bdc9"/><rect x="6.5" y="4.7" width="2.6" height="2.6" fill="#5fcbe4"/></svg></span><span class="lb" style="letter-spacing:-0.224px">Software devices</span></div>
  <div class="row"><svg class="chev" width="7" height="10" viewBox="0 0 7 10"><path d="M1 0.9l3.8 3.9L1 8.7" fill="none" stroke="#868686" stroke-width="1.45"/></svg><span class="ic"><svg width="16" height="16" viewBox="0 0 16 16"><rect x="2.9" y="4" width="2.8" height="8" fill="url(#gSpkA)"/><path d="M5.6 4.3L11.9 0.2V15.9L5.6 11.7Z" fill="url(#gSpkB)"/></svg></span><span class="lb" style="letter-spacing:-0.044px">Sound, video and game controllers</span></div>
  <div class="row"><svg class="chev" width="7" height="10" viewBox="0 0 7 10"><path d="M1 0.9l3.8 3.9L1 8.7" fill="none" stroke="#868686" stroke-width="1.45"/></svg><span class="ic"><svg width="16" height="16" viewBox="0 0 16 16"><path d="M8.8 3.6L5.7 0.9L1.5 5.1L5.7 9.3L7.4 7.6" fill="none" stroke="#1c1c1c" stroke-width="1.25"/><path d="M6.2 5.4H9.6" stroke="#1c1c1c" stroke-width="1.2"/><path d="M1.6 9.7L4.9 11.5L1.6 13.2Z" fill="#303030"/><path d="M2 13.4H6" stroke="#8a8a8a" stroke-width="0.7"/><rect x="6.2" y="7.9" width="8.8" height="6" fill="#2e8f52"/><rect x="6.2" y="7.9" width="8.8" height="0.8" fill="#1f6f3c"/><rect x="8.8" y="9.4" width="4" height="3.2" fill="#1d4a33"/><circle cx="7.800000000000001" cy="9.6" r="0.6" fill="#bfe8c8"/><circle cx="7.800000000000001" cy="12.4" r="0.6" fill="#bfe8c8"/><circle cx="13.4" cy="9.6" r="0.6" fill="#bfe8c8"/><circle cx="13.4" cy="12.4" r="0.6" fill="#bfe8c8"/><rect x="15" y="6" width="1.1" height="10" fill="#9a9a9a"/><rect x="7.2" y="14" width="5.8" height="1.9" fill="#e9a61e"/><rect x="8.8" y="14" width="0.5" height="1.9" fill="#c98a10"/><rect x="10.8" y="14" width="0.5" height="1.9" fill="#c98a10"/><path d="M9.5 6.6L11 5.6L12.5 6.6V8H9.5Z" fill="#dfeee3"/></svg></span><span class="lb" style="letter-spacing:-0.096px">Storage controllers</span></div>
  <div class="row"><svg class="chev" width="7" height="10" viewBox="0 0 7 10"><path d="M1 0.9l3.8 3.9L1 8.7" fill="none" stroke="#868686" stroke-width="1.45"/></svg><span class="ic"><svg width="16" height="16" viewBox="0 0 16 16"><rect x="0.3" y="1.2" width="6.3" height="12.7" fill="#3a3a3a"/><rect x="0.3" y="1.2" width="6.3" height="2.3" fill="#8b9a8d"/><rect x="1.2" y="1.9" width="3.2" height="0.7" fill="#55635a"/><rect x="1.2" y="4.6" width="4.2" height="0.7" fill="#6a6a6a"/><rect x="1.2" y="6.3" width="2.4" height="1.6" fill="#8a8a8a"/><rect x="1.2" y="9" width="1.6" height="3.6" fill="#6a6a6a"/><rect x="5.2" y="5.5" width="10.3" height="7.1" fill="url(#gScr)" stroke="#1e7bd2" stroke-width="1"/><rect x="7" y="14.6" width="6" height="0.8" fill="#86a4c4"/><rect x="9.3" y="13.1" width="1.5" height="1.5" fill="#8fb4dc"/></svg></span><span class="lb" style="letter-spacing:-0.309px">System devices</span></div>
  <div class="row"><svg class="chev" width="7" height="10" viewBox="0 0 7 10"><path d="M1 0.9l3.8 3.9L1 8.7" fill="none" stroke="#868686" stroke-width="1.45"/></svg><span class="ic"><svg width="16" height="16" viewBox="0 0 16 16"><rect x="5.3" y="0.5" width="4.2" height="4" fill="#f6f6f6" stroke="#9a9a9a" stroke-width="0.8"/><rect x="6.2" y="1.6" width="0.9" height="1" fill="#9a9a9a"/><rect x="7.8" y="1.6" width="0.9" height="1" fill="#9a9a9a"/><path d="M4 4.3H10.9V9L9.3 11.5H5.6L4 9Z" fill="#3c3c3c"/><rect x="6.9" y="5.6" width="1.1" height="3" rx="0.5" fill="#4d4d4d"/><rect x="6.2" y="11.4" width="2.5" height="4.5" fill="#3a3a3a"/></svg></span><span class="lb" style="letter-spacing:-0.214px">Universal Serial Bus controllers</span></div>
  <div class="row"><svg class="chev" width="7" height="10" viewBox="0 0 7 10"><path d="M1 0.9l3.8 3.9L1 8.7" fill="none" stroke="#868686" stroke-width="1.45"/></svg><span class="ic"><svg width="16" height="16" viewBox="0 0 16 16"><rect x="5.3" y="0.5" width="4.2" height="4" fill="#f6f6f6" stroke="#9a9a9a" stroke-width="0.8"/><rect x="6.2" y="1.6" width="0.9" height="1" fill="#9a9a9a"/><rect x="7.8" y="1.6" width="0.9" height="1" fill="#9a9a9a"/><path d="M4 4.3H10.9V9L9.3 11.5H5.6L4 9Z" fill="#3c3c3c"/><rect x="6.9" y="5.6" width="1.1" height="3" rx="0.5" fill="#4d4d4d"/><rect x="6.2" y="11.4" width="2.5" height="4.5" fill="#3a3a3a"/></svg></span><span class="lb" style="letter-spacing:-0.331px">Universal Serial Bus devices</span></div>
 </div>
 <div id="status"><i style="left:676px"></i><i style="left:809px"></i><i style="left:880px"></i></div>
</div>
<svg id="hl" width="998" height="861" viewBox="0 0 998 861"><rect x="81.4" y="242.45" width="193.9" height="21.8" fill="none" stroke="#56c56a" stroke-width="4.8"/></svg>
</body></html>
